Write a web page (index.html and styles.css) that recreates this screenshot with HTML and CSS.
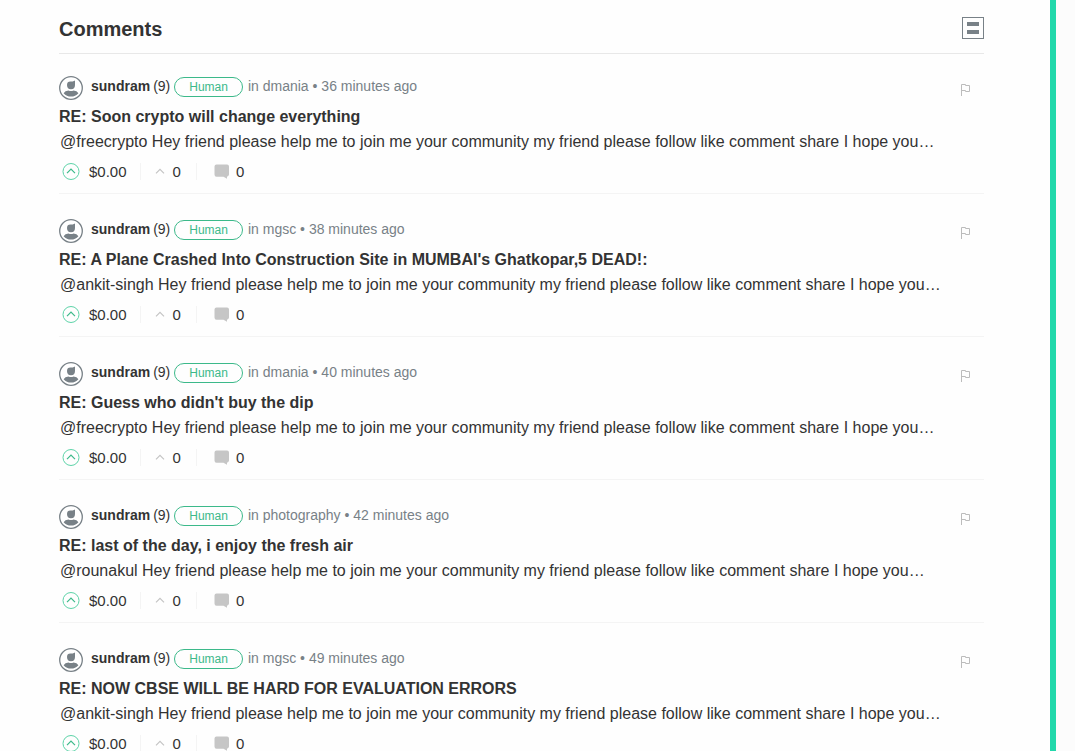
FILE: index.html
```
<!DOCTYPE html>
<html lang="en">
<head>
    <meta charset="UTF-8">
    <title>Comments</title>
    <link rel="stylesheet" href="styles.css">
</head>
<body>
<!-- shared icons -->
<svg class="icon-defs" width="0" height="0" aria-hidden="true">
    <symbol id="icon-avatar" viewBox="0 0 24 24">
        <circle cx="12" cy="12" r="11.3" fill="#fff" stroke="#788187" stroke-width="1.3"/>
        <path d="M8 9 Q8 5.6 11.4 5.6 Q13.8 5.6 16 4.4 V9 Q16 13.2 12 13.2 Q8 13.2 8 9 Z" fill="#788187"/>
        <path d="M4.6 17.2 Q6 14.6 9.5 14.4 Q12 15.4 14.5 14.4 Q18 14.6 19.4 17.2 Q16.4 20.6 12 20.6 Q7.6 20.6 4.6 17.2 Z" fill="#788187"/>
    </symbol>
    <symbol id="icon-upvote" viewBox="0 0 18 18">
        <circle cx="9" cy="9.5" r="8" fill="none" stroke="#5dd3a8" stroke-width="1"/>
        <path d="M5 11.2 L9 7.2 L13 11.2" fill="none" stroke="#3cb98a" stroke-width="1.2"/>
    </symbol>
    <symbol id="icon-chevron" viewBox="0 0 10 6">
        <path d="M1 5.4 L5 1.4 L9 5.4" fill="none" stroke="#c4c4c4" stroke-width="1.2"/>
    </symbol>
    <symbol id="icon-comment" viewBox="0 0 16 15">
        <path d="M2.5 0.5 H13 Q15 0.5 15 2.5 V10.5 Q15 12 13 12.7 V14.8 L9.5 12.7 H2.5 Q0.5 12.7 0.5 10.5 V2.5 Q0.5 0.5 2.5 0.5 Z" fill="#c6c6c6"/>
    </symbol>
    <symbol id="icon-flag" viewBox="0 0 9 12">
        <path d="M0.5 12 V0.5 H4.5 V1.5 H8.5 V7.5 H4.5 V6.5 H0.5" fill="none" stroke="#bcbcbc" stroke-width="1"/>
    </symbol>
</svg>

<main class="page">
    <div class="content">
        <header class="header">
            <h1>Comments</h1>
            <button class="layout-toggle" type="button" aria-label="Toggle layout">
                <svg width="22" height="22" viewBox="0 0 22 22">
                    <rect x="0.5" y="0.5" width="21" height="21" fill="none" stroke="#788187"/>
                    <rect x="5" y="5" width="12" height="4" fill="#788187"/>
                    <rect x="5" y="13" width="12" height="4" fill="#788187"/>
                </svg>
            </button>
        </header>

        <article class="comment">
            <div class="meta">
                <a class="avatar" href="#" aria-label="sundram"><svg><use href="#icon-avatar"/></svg></a>
                <div class="byline">
                    <a class="author" href="#">sundram</a>
                    <span class="reputation">(9)</span>
                    <span class="badge">Human</span>
                    <span class="when">in <a href="#">dmania</a> • <a href="#">36 minutes ago</a></span>
                </div>
                <button class="flag" type="button" aria-label="Flag"><svg><use href="#icon-flag"/></svg></button>
            </div>
            <h2><a href="#">RE: Soon crypto will change everything</a></h2>
            <p><a href="#">@freecrypto Hey friend please help me to join me your community my friend please follow like comment share I hope you…</a></p>
            <div class="actions">
                <button class="upvote" type="button" aria-label="Upvote"><svg><use href="#icon-upvote"/></svg></button>
                <span class="payout">$0.00</span>
                <span class="votes"><svg><use href="#icon-chevron"/></svg>0</span>
                <a class="replies" href="#"><svg><use href="#icon-comment"/></svg>0</a>
            </div>
        </article>

        <article class="comment">
            <div class="meta">
                <a class="avatar" href="#" aria-label="sundram"><svg><use href="#icon-avatar"/></svg></a>
                <div class="byline">
                    <a class="author" href="#">sundram</a>
                    <span class="reputation">(9)</span>
                    <span class="badge">Human</span>
                    <span class="when">in <a href="#">mgsc</a> • <a href="#">38 minutes ago</a></span>
                </div>
                <button class="flag" type="button" aria-label="Flag"><svg><use href="#icon-flag"/></svg></button>
            </div>
            <h2><a href="#">RE: A Plane Crashed Into Construction Site in MUMBAI's Ghatkopar,5 DEAD!:</a></h2>
            <p><a href="#">@ankit-singh Hey friend please help me to join me your community my friend please follow like comment share I hope you…</a></p>
            <div class="actions">
                <button class="upvote" type="button" aria-label="Upvote"><svg><use href="#icon-upvote"/></svg></button>
                <span class="payout">$0.00</span>
                <span class="votes"><svg><use href="#icon-chevron"/></svg>0</span>
                <a class="replies" href="#"><svg><use href="#icon-comment"/></svg>0</a>
            </div>
        </article>

        <article class="comment">
            <div class="meta">
                <a class="avatar" href="#" aria-label="sundram"><svg><use href="#icon-avatar"/></svg></a>
                <div class="byline">
                    <a class="author" href="#">sundram</a>
                    <span class="reputation">(9)</span>
                    <span class="badge">Human</span>
                    <span class="when">in <a href="#">dmania</a> • <a href="#">40 minutes ago</a></span>
                </div>
                <button class="flag" type="button" aria-label="Flag"><svg><use href="#icon-flag"/></svg></button>
            </div>
            <h2><a href="#">RE: Guess who didn't buy the dip</a></h2>
            <p><a href="#">@freecrypto Hey friend please help me to join me your community my friend please follow like comment share I hope you…</a></p>
            <div class="actions">
                <button class="upvote" type="button" aria-label="Upvote"><svg><use href="#icon-upvote"/></svg></button>
                <span class="payout">$0.00</span>
                <span class="votes"><svg><use href="#icon-chevron"/></svg>0</span>
                <a class="replies" href="#"><svg><use href="#icon-comment"/></svg>0</a>
            </div>
        </article>

        <article class="comment">
            <div class="meta">
                <a class="avatar" href="#" aria-label="sundram"><svg><use href="#icon-avatar"/></svg></a>
                <div class="byline">
                    <a class="author" href="#">sundram</a>
                    <span class="reputation">(9)</span>
                    <span class="badge">Human</span>
                    <span class="when">in <a href="#">photography</a> • <a href="#">42 minutes ago</a></span>
                </div>
                <button class="flag" type="button" aria-label="Flag"><svg><use href="#icon-flag"/></svg></button>
            </div>
            <h2><a href="#">RE: last of the day, i enjoy the fresh air</a></h2>
            <p><a href="#">@rounakul Hey friend please help me to join me your community my friend please follow like comment share I hope you…</a></p>
            <div class="actions">
                <button class="upvote" type="button" aria-label="Upvote"><svg><use href="#icon-upvote"/></svg></button>
                <span class="payout">$0.00</span>
                <span class="votes"><svg><use href="#icon-chevron"/></svg>0</span>
                <a class="replies" href="#"><svg><use href="#icon-comment"/></svg>0</a>
            </div>
        </article>

        <article class="comment">
            <div class="meta">
                <a class="avatar" href="#" aria-label="sundram"><svg><use href="#icon-avatar"/></svg></a>
                <div class="byline">
                    <a class="author" href="#">sundram</a>
                    <span class="reputation">(9)</span>
                    <span class="badge">Human</span>
                    <span class="when">in <a href="#">mgsc</a> • <a href="#">49 minutes ago</a></span>
                </div>
                <button class="flag" type="button" aria-label="Flag"><svg><use href="#icon-flag"/></svg></button>
            </div>
            <h2><a href="#">RE: NOW CBSE WILL BE HARD FOR EVALUATION ERRORS</a></h2>
            <p><a href="#">@ankit-singh Hey friend please help me to join me your community my friend please follow like comment share I hope you…</a></p>
            <div class="actions">
                <button class="upvote" type="button" aria-label="Upvote"><svg><use href="#icon-upvote"/></svg></button>
                <span class="payout">$0.00</span>
                <span class="votes"><svg><use href="#icon-chevron"/></svg>0</span>
                <a class="replies" href="#"><svg><use href="#icon-comment"/></svg>0</a>
            </div>
        </article>
    </div>
</main>
</body>
</html>
```
FILE: styles.css
```
* {
    box-sizing: border-box;
}

html {
    scrollbar-width: none;
}

body {
    margin: 0;
    background: #fcfcfc;
    color: #333;
    font-family: Arial, "Liberation Sans", sans-serif;
}

a {
    color: inherit;
    text-decoration: none;
}

button {
    padding: 0;
    border: 0;
    background: none;
    cursor: pointer;
}

svg {
    display: block;
}

.icon-defs {
    position: absolute;
}

.page {
    margin-right: 19px;
    padding: 0 66px 0 59px;
    border-right: 6px solid #22d8ab;
    background: #fefefe;
}

.header {
    display: flex;
    align-items: center;
    justify-content: space-between;
    height: 54px;
    padding-top: 3px;
    border-bottom: 1px solid #e8e8e8;
}

.header h1 {
    margin: 0;
    padding-top: 2px;
    font-size: 20px;
    line-height: 24px;
}

.comment {
    margin-bottom: 3px;
    padding: 22px 0 11px;
    border-bottom: 1px solid #f4f4f4;
}

.meta {
    display: flex;
    height: 24px;
    font-size: 14px;
    line-height: 20px;
}

.avatar svg {
    width: 24px;
    height: 24px;
}

.byline {
    display: flex;
    flex: 1;
    margin-left: 8px;
}

.author {
    font-weight: bold;
}

.reputation {
    margin-left: 3px;
}

.badge {
    height: 20px;
    margin: 1px 5px 0 4px;
    padding: 0 14px;
    border: 1px solid #3cb98a;
    border-radius: 10px;
    color: #3cb98a;
    font-size: 12px;
    line-height: 18px;
}

.when {
    color: #788187;
}

.flag {
    align-self: flex-start;
    margin: 8px 14px 0 0;
}

.flag svg {
    width: 9px;
    height: 12px;
}

.comment h2 {
    margin: 5px 0 0;
    font-size: 16px;
    line-height: 24px;
}

.comment p {
    margin: 1px 0 0 1px;
    overflow: hidden;
    font-size: 16px;
    line-height: 24px;
    text-overflow: ellipsis;
    white-space: nowrap;
}

.actions {
    display: flex;
    align-items: center;
    height: 22px;
    margin: 6px 0 0 3px;
    font-size: 15px;
}

.upvote svg {
    width: 18px;
    height: 18px;
}

.payout {
    margin: 0 13px 0 9px;
}

.votes,
.replies {
    display: flex;
    align-items: center;
}

.votes {
    gap: 8px;
    padding: 0 15px 0 14px;
    border-left: 1px solid #f4f4f4;
    border-right: 1px solid #f4f4f4;
}

.votes svg {
    width: 10px;
    height: 6px;
}

.replies {
    gap: 6px;
    margin-left: 17px;
}

.replies svg {
    width: 16px;
    height: 15px;
}
```
